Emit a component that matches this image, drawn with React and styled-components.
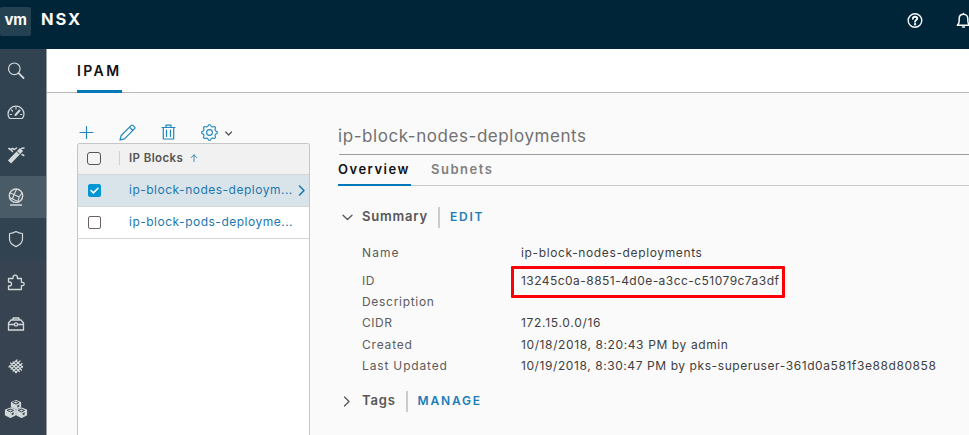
import React from 'react';
import styled, { createGlobalStyle, css } from 'styled-components';

const GlobalStyle = createGlobalStyle`
  * { box-sizing: border-box; }
  body { margin: 0; overflow: hidden; background: #fafafa; font-family: Inter, "Liberation Sans", sans-serif; }
`;

const Page = styled.div`
  width: 100%;
  height: 435px;
  display: flex;
  flex-direction: column;
  overflow: hidden;
`;
const Header = styled.header`
  height: 49px;
  flex: none;
  display: flex;
  align-items: flex-start;
  background: #002538;
  color: #fafafa;
`;
const Logo = styled.div`
  width: 31px;
  height: 29px;
  margin: 7px 10px 0 0;
  display: flex;
  justify-content: center;
  background: #244151;
  border-radius: 2px;
  font-size: 15px;
  line-height: 26px;
  font-weight: 700;
  letter-spacing: -0.4px;
`;
const Product = styled.div`
  flex: 1;
  padding-top: 9px;
  font-size: 16.5px;
  line-height: 20px;
  font-weight: 700;
  letter-spacing: 1.9px;
`;
const HeaderIcons = styled.div`
  width: 63px;
  flex: none;
  display: flex;
  gap: 32px;
  padding-top: 12px;
  svg { flex: none; }
`;
const Body = styled.div`
  flex: 1;
  min-height: 0;
  display: flex;
`;
const Sidebar = styled.nav`
  width: 47px;
  flex: none;
  background: #364451;
  border-right: 1px solid #9a9d9f;
`;
const NavItem = styled.div`
  height: 42.3px;
  padding-right: 14px;
  display: flex;
  align-items: center;
  justify-content: center;
  color: #d3d8da;
  background: ${(p) => (p.$active ? '#495b66' : p.$low ? '#374350' : '#314350')};
`;
const Main = styled.main`
  flex: 1;
  min-width: 0;
  display: flex;
  flex-direction: column;
`;
const TopTabs = styled.div`
  height: 44px;
  flex: none;
  padding-left: 30px;
  background: #fff;
  border-bottom: 1px solid #b8b8b8;
`;
const TopTab = styled.div`
  width: 45px;
  height: 44px;
  padding: 12px 0 0 0;
  border-bottom: 3px solid #0079b8;
  color: #111;
  font-size: 14px;
  line-height: 20px;
  font-weight: 600;
  letter-spacing: 2.4px;
`;
const Workspace = styled.div`
  flex: 1;
  min-height: 0;
  display: flex;
  padding-left: 30px;
`;
const ListPane = styled.section`
  width: 233px;
  margin-right: 28px;
  flex: none;
  display: flex;
  flex-direction: column;
`;
const Toolbar = styled.div`
  height: 50px;
  padding-left: 2px;
  padding-top: 28px;
  display: flex;
  align-items: center;
  color: #2186bd;
  > svg { margin-right: 25px; flex: none; }
  > svg:nth-child(4) { margin-right: 6px; }
`;
const Grid = styled.div`
  flex: 1;
  background: #fff;
  border: 1px solid #c6c6c6;
  border-bottom: 0;
  border-radius: 3px 3px 0 0;
  overflow: hidden;
`;
const GridRow = styled.div`
  height: 32px;
  display: flex;
  align-items: center;
  padding-left: 10px;
  border-bottom: 1px solid #d6d6d6;
  color: #1c77af;
  background: ${(p) => (p.$selected ? '#d9e4ea' : '#fff')};
`;
const GridHead = styled(GridRow)`
  height: 31px;
  padding-left: 9px;
  padding-bottom: 2px;
  background: #f1f1f1;
  color: #505050;
`;
const Box = styled.span`
  width: 13px;
  height: 13px;
  flex: none;
  display: flex;
  align-items: center;
  justify-content: center;
  border: 1px solid #6c6068;
  border-radius: 2px;
  background: #fff;
  ${(p) => p.$checked && css`background: #0095d3; border-color: #0095d3;`}
  ${(p) => p.$head && css`width: 14px; height: 13px; border: 1.5px solid #555; border-radius: 3px; background: #f4f4f4;`}
`;
const HeadName = styled.div`
  margin-left: 18px;
  height: 14px;
  padding-left: 9px;
  border-left: 1px solid #d0d0d0;
  display: flex;
  align-items: center;
  gap: 7px;
  font-size: 11.5px;
  font-weight: 600;
  letter-spacing: 0.4px;
  color: #555;
`;
const ItemName = styled.span`
  width: 164px;
  margin: 0 4px 1px 28px;
  font-size: 12px;
  line-height: 18px;
  letter-spacing: 0.5px;
  white-space: nowrap;
`;
const Detail = styled.section`
  flex: 1;
  min-width: 0;
`;
const Title = styled.h1`
  height: 62px;
  margin: 0 0 0 1px;
  padding-top: 32px;
  border-bottom: 1px solid #9b9b9b;
  color: #717171;
  font-size: 17px;
  line-height: 22px;
  font-weight: 400;
  letter-spacing: 0.56px;
  text-indent: -1px;
`;
const Tabs = styled.div`
  height: 31px;
  display: flex;
  gap: 20px;
  box-shadow: inset 0 -1px #ccc;
`;
const Tab = styled.div`
  height: 31px;
  width: 73px;
  padding-top: 4px;
  color: ${(p) => (p.$active ? '#111' : '#7f7f7f')};
  border-bottom: ${(p) => (p.$active ? '2px solid #0079b8' : '0')};
  font-size: 13px;
  line-height: 20px;
  font-weight: 600;
  letter-spacing: 1.5px;
`;
const SectionHead = styled.div`
  height: 21px;
  margin: ${(p) => p.$top} 0 0 4px;
  display: flex;
  align-items: center;
  color: #565656;
  > svg { margin-right: 9px; flex: none; }
`;
const SectionName = styled.h2`
  margin: 0 10px 3px 0;
  font-size: 13px;
  line-height: 18px;
  font-weight: 600;
  letter-spacing: 0.8px;
`;
const Action = styled.span`
  border-left: 2px solid #ccc;
  padding-left: 10px;
  height: 21px;
  line-height: 20px;
  font-size: 12px;
  font-weight: 600;
  letter-spacing: 1.8px;
  color: #1a7db8;
`;
const Fields = styled.dl`
  margin: 14px 0 0 24px;
  display: grid;
  grid-template-columns: 158px 1fr;
  grid-template-rows: 28px repeat(5, 21.2px);
`;
const Label = styled.dt`
  font-size: 12px;
  line-height: 21px;
  letter-spacing: ${(p) => p.$spacing};
  color: #5c5c5c;
`;
const Value = styled.dd`
  margin: 0 0 0 1px;
  justify-self: start;
  position: relative;
  font-size: 12px;
  line-height: 21px;
  letter-spacing: ${(p) => p.$spacing};
  color: #3e3e3e;
  white-space: nowrap;
`;
const Highlight = styled.span`
  position: absolute;
  inset: -4px -6px -7px -10px;
  border: 3px solid #fb0007;
  border-radius: 1px;
`;

const Icon = ({ w = 18, h = w, vb = '0 0 18 18', sw = 1.2, children }) => (
  <svg width={w} height={h} viewBox={vb} fill="none" stroke="currentColor" strokeWidth={sw} strokeLinecap="round" strokeLinejoin="round">
    {children}
  </svg>
);

const Search = () => <Icon><circle cx="7.3" cy="7.8" r="5.8" /><path d="M11.6 12.100 16.500 17" strokeWidth="1.8" /></Icon>;
const Gauge = () => <Icon><path d="M2.700 15.500C1.500 14 1 12.700 1 11a8 7.800 0 0 1 16 0c0 1.700-.5 3-1.700 4.500Z" sw={1.4} /><path d="m8.500 12 4-4.500" strokeWidth="2" /><path d="M9 4.500v1.500M4.500 7l1 1M3.200 11.500h1.200M13.600 11.500h1.200" /></Icon>;
const Wand = () => <Icon><path d="M2.500 16 14.500 3.500" strokeWidth="4.400" strokeLinecap="butt" /><path d="m1.800 2.500 1.700 1 2-1 2 1 2-1.500M4 4l1.500 1.500M15 8.500l1.800 1M14.500 2.500l2.500-.500" strokeWidth="1.500" /><path d="m10 5.500 2.500 2.500" stroke="#314350" strokeWidth="1" /></Icon>;
const Globe = () => <Icon><circle cx="9" cy="7.700" r="6.700" strokeWidth="1.400" /><path d="m3 5 4 1.500L9.500 1.500M7 6.500 5.500 11 2.500 9.500M7 6.500 12 9l3-4M12 9l-1 5M5.500 11l5.500 2.500" /><path d="M3.500 17h11" strokeWidth="1.500" /></Icon>;
const Shield = () => <Icon><path d="M9 1.500c2 1.300 4 1.900 6.500 2V9c0 3.600-2.800 6-6.500 7.600C5.300 15 2.500 12.600 2.500 9V3.500C5 3.400 7 2.800 9 1.500Z" /></Icon>;
const Puzzle = () => <Icon sw={1.3}><path d="M1.500 5.500H6V4.300a2.200 2.200 0 0 1 4.400 0v1.200h4v3.800h1.100a1.700 1.700 0 0 1 0 3.400h-1.100V16.500H1.500V13h1a2 2 0 0 0 0-4h-1Z" /></Icon>;
const Toolbox = () => <Icon sw={1.3}><path d="M1.500 15V8L4 5h10l2.500 3v7ZM6 5V3h6v2M1.500 9.500H7M11 9.500h5.500" /><circle cx="9" cy="9.500" r="1.600" /></Icon>;
const Weave = () => <Icon sw={1.2}><path d="m2 10 8-7M4 12l9-8M6 14l9-7.500M8.500 15.500l7-6M3.500 6l9 8.500M6 5l8.500 8M9 4l6.500 6M2.500 9l7 6.500" /></Icon>;
const Cubes = () => (
  <Icon w={24} h={20} vb="0 0 24 20" sw={1.2}>
    {['M12 1.500 16.500 3.500V8L12 10 7.500 8V3.500Z', 'M6.500 9 11.300 11V16l-4.800 2.500L1.500 16v-5Z', 'M17.500 9 22.500 11V16l-5 2.500L12.700 16v-5Z'].map((d) => <path key={d} d={d} fill="currentColor" />)}
    <g stroke="#374350" fill="none" strokeWidth="1"><path d="m9 3.700 3 1.400 3-1.400-3-1.300ZM3.500 11.500l3 1.400 3-1.400-3-1.300ZM14.500 11.500l3 1.400 3-1.400-3-1.300Z" /></g>
    <g fill="#374350" stroke="none"><path d="m13.300 6.400 2-1v2l-2 1ZM7.700 14.200l2-1v2l-2 1ZM18.700 14.200l2-1v2l-2 1Z" /></g>
  </Icon>
);
const Help = () => <Icon w={17} sw={1.5}><circle cx="9.500" cy="9" r="7.200" /><path d="M7.200 7.200c.1-1.600 1.200-2.200 2.400-2.200 1.300 0 2.300.8 2.300 2 0 1.500-2.300 1.600-2.300 3.300" strokeWidth="2" /><circle cx="9.600" cy="13" r=".5" fill="currentColor" /></Icon>;
const Bell = () => <Icon w={17} sw={1.6}><path d="M9 1.500v1M2.500 14h13c-1.400-1.300-1.900-2.300-1.900-4.500V7.300C13.600 4.500 11.700 2.500 9 2.500S4.400 4.500 4.400 7.300v2.200c0 2.200-.5 3.200-1.900 4.500ZM8 16h2" /></Icon>;
const Plus = () => <Icon w={15} vb="0 0 15 15"><path d="M7.500 1.500v12M1 7.500h13" /></Icon>;
const Pencil = () => <Icon w={17} vb="0 0 17 17"><path d="m1 16 1.200-4.500L12.300 1.400c.5-.5 1-.5 1.500 0l1.800 1.800c.5.5.5 1 0 1.500L5.500 14.800ZM10.500 3.200l3.300 3.300" /></Icon>;
const Trash = () => <Icon w={15} h={16} vb="0 0 15 16"><path d="M1 3.500h13M5 3.300V1.200h5v2.100M2.300 3.500V15h10.400V3.500M5.500 6v6.500M9.500 6v6.500" /></Icon>;
const gearPoints = Array.from({ length: 32 }, (_, i) => {
  const angle = ((i - 0.5) * Math.PI) / 16;
  const radius = i % 4 < 2 ? 7.8 : 6.2;
  return `${(8.5 + radius * Math.sin(angle)).toFixed(2)},${(8.5 - radius * Math.cos(angle)).toFixed(2)}`;
}).join(' ');
const Gear = () => <Icon w={17} vb="0 0 17 17" sw={1.1}><polygon points={gearPoints} /><circle cx="8.500" cy="8.500" r="2.900" /></Icon>;
const MenuCaret = () => <Icon w={9} h={17} vb="0 0 9 17"><path d="m1.700 8 2.900 3 2.900-3" stroke="#555" /></Icon>;
const Check = () => <Icon w={11} vb="0 0 11 11" sw={1.6}><path d="m2 5.500 2.400 2.400L9 3.300" stroke="#fff" /></Icon>;
const SortUp = () => <Icon w={8} h={8} vb="0 0 8 8" sw={1}><path d="M4 7.500V1M1.200 3.600 4 .8l2.800 2.800" stroke="#398bb8" /></Icon>;
const RowArrow = () => <Icon w={9} h={14} vb="0 0 9 14" sw={1.6}><path d="m2.500 2 4.500 4.500L2.500 11" /></Icon>;
const Open = () => <Icon w={11} h={11} vb="0 0 11 11" sw={1.3}><path d="M1 3.300 5.500 7.500 10 3.300" /></Icon>;
const Closed = () => <Icon w={11} h={11} vb="0 0 11 11" sw={1.3}><path d="M2.500 1 7 5.500 2.500 10" /></Icon>;

const NAV = [Search, Gauge, Wand, Globe, Shield, Puzzle, Toolbox, Weave, Cubes];
const FIELDS = [
  ['Name', 'ip-block-nodes-deployments', '1.1px', '0.63px'],
  ['ID', '13245c0a-8851-4d0e-a3cc-c51079c7a3df', '0.6px', '0.46px'],
  ['Description', '', '0.7px'],
  ['CIDR', '172.15.0.0/16', '0.54px', '0.7px'],
  ['Created', '10/18/2018, 8:20:43 PM by admin', '0.8px', '0.61px'],
  ['Last Updated', '10/19/2018, 8:30:47 PM by pks-superuser-361d0a581f3e88d80858', '0.84px', '0.58px'],
];

export default function App() {
  return (
    <Page>
      <GlobalStyle />
      <Header>
        <Logo>vm</Logo>
        <Product>NSX</Product>
        <HeaderIcons><Help /><Bell /></HeaderIcons>
      </Header>
      <Body>
        <Sidebar>
          {NAV.map((Glyph, i) => <NavItem key={i} $active={i === 3} $low={i > 4}><Glyph /></NavItem>)}
        </Sidebar>
        <Main>
          <TopTabs><TopTab>IPAM</TopTab></TopTabs>
          <Workspace>
            <ListPane>
              <Toolbar><Plus /><Pencil /><Trash /><Gear /><MenuCaret /></Toolbar>
              <Grid>
                <GridHead><Box $head /><HeadName>IP Blocks <SortUp /></HeadName></GridHead>
                <GridRow $selected><Box $checked><Check /></Box><ItemName>ip-block-nodes-deploym...</ItemName><RowArrow /></GridRow>
                <GridRow><Box /><ItemName>ip-block-pods-deployme...</ItemName></GridRow>
              </Grid>
            </ListPane>
            <Detail>
              <Title>ip-block-nodes-deployments</Title>
              <Tabs><Tab $active>Overview</Tab><Tab>Subnets</Tab></Tabs>
              <SectionHead $top="21px"><Open /><SectionName>Summary</SectionName><Action>EDIT</Action></SectionHead>
              <Fields>
                {FIELDS.map(([label, value, labelSpacing, valueSpacing]) => (
                  <React.Fragment key={label}>
                    <Label $spacing={labelSpacing}>{label}</Label>
                    <Value $spacing={valueSpacing}>{value}{label === 'ID' && <Highlight />}</Value>
                  </React.Fragment>
                ))}
              </Fields>
              <SectionHead $top="15px"><Closed /><SectionName>Tags</SectionName><Action>MANAGE</Action></SectionHead>
            </Detail>
          </Workspace>
        </Main>
      </Body>
    </Page>
  );
}
